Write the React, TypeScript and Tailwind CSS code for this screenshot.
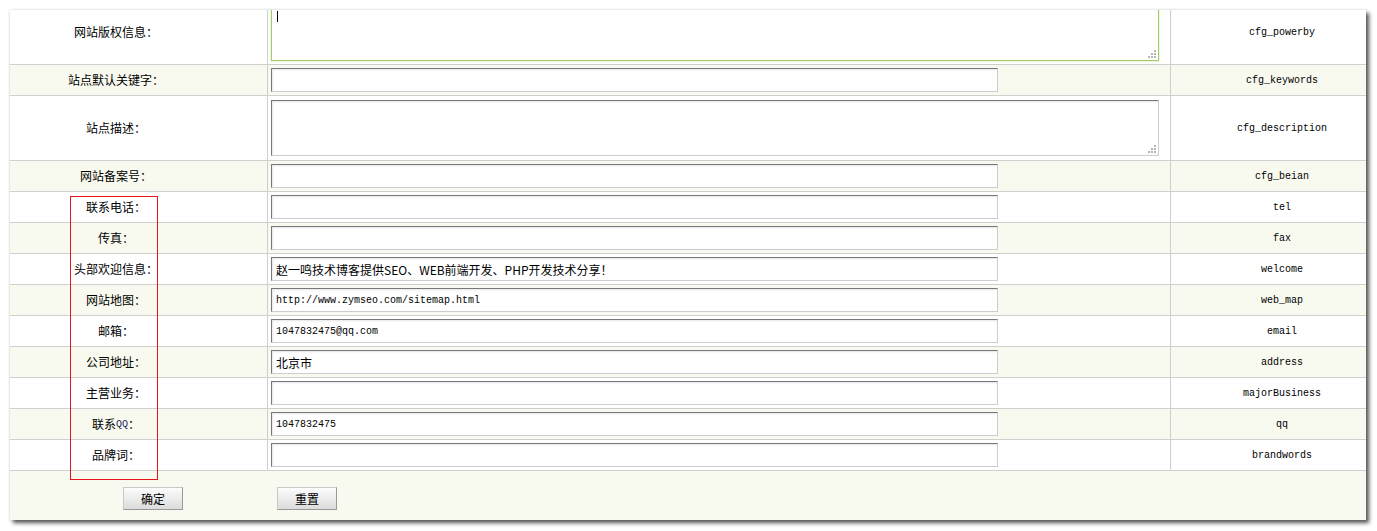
const cjk = '[font-family:"Noto_Sans_CJK_SC","Liberation_Sans",sans-serif]';
const mono = '[font-family:"Liberation_Mono","Noto_Sans_CJK_SC",monospace]';

type Row = {
  label: React.ReactNode;
  field: string;
  value?: string;
  valueMono?: boolean;
  kind?: 'input' | 'textarea' | 'focused';
};

const rows: Row[] = [
  { label: '网站版权信息：', field: 'cfg_powerby', kind: 'focused' },
  { label: '站点默认关键字：', field: 'cfg_keywords' },
  { label: '站点描述：', field: 'cfg_description', kind: 'textarea' },
  { label: '网站备案号：', field: 'cfg_beian' },
  { label: '联系电话：', field: 'tel' },
  { label: '传真：', field: 'fax' },
  { label: '头部欢迎信息：', field: 'welcome', value: '赵一鸣技术博客提供SEO、WEB前端开发、PHP开发技术分享！' },
  { label: '网站地图：', field: 'web_map', value: 'http://www.zymseo.com/sitemap.html', valueMono: true },
  { label: '邮箱：', field: 'email', value: '1047832475@qq.com', valueMono: true },
  { label: '公司地址：', field: 'address', value: '北京市' },
  { label: '主营业务：', field: 'majorBusiness' },
  {
    label: (
      <>
        联系<span className={`${mono} text-[10px] text-[#1a1a5a]`}>QQ</span>：
      </>
    ),
    field: 'qq',
    value: '1047832475',
    valueMono: true,
  },
  { label: '品牌词：', field: 'brandwords' },
];

const ResizeDots = () => (
  <svg className="absolute right-[2px] bottom-[2px]" width="9" height="9" viewBox="0 0 9 9">
    <rect x="6" y="0" width="2" height="2" fill="#b5b5b5" />
    <rect x="3" y="3" width="2" height="2" fill="#b5b5b5" />
    <rect x="6" y="3" width="2" height="2" fill="#b5b5b5" />
    <rect x="0" y="6" width="2" height="2" fill="#b5b5b5" />
    <rect x="3" y="6" width="2" height="2" fill="#b5b5b5" />
    <rect x="6" y="6" width="2" height="2" fill="#b5b5b5" />
  </svg>
);

const Field = ({ row }: { row: Row }) => {
  if (row.kind === 'focused') {
    return (
      <div className="relative w-[888px] h-[56px] shrink-0">
        <textarea
          defaultValue=""
          className="block w-full h-full resize-none border border-[#a3cb6a] bg-white outline-none shadow-[0_0_2px_#c9e3a3]"
        />
        <span className="absolute left-[6px] top-[6px] w-px h-[11px] bg-black" />
        <ResizeDots />
      </div>
    );
  }
  if (row.kind === 'textarea') {
    return (
      <div className="relative w-[888px] h-[56px] shrink-0">
        <textarea
          defaultValue=""
          className="block w-full h-full resize-none border border-t-[#787878] border-l-[#787878] border-b-[#cdcdcd] border-r-[#cdcdcd] bg-white outline-none shadow-[inset_1px_1px_2px_#e6e6e6]"
        />
        <ResizeDots />
      </div>
    );
  }
  return (
    <input
      type="text"
      readOnly
      defaultValue={row.value ?? ''}
      className={`block w-[727px] h-[24px] px-[4px] border border-t-[#787878] border-l-[#787878] border-b-[#cdcdcd] border-r-[#cdcdcd] bg-white outline-none shadow-[inset_1px_1px_2px_#e6e6e6] text-black ${
        row.valueMono ? `${mono} text-[10px]` : `${cjk} text-[12px]`
      }`}
    />
  );
};

const rowHeight = (i: number) => {
  if (i === 0) return 'h-[55px]';
  if (i === 2) return 'h-[65px]';
  return 'h-[31px]';
};

export default function App() {
  return (
    <div className="min-h-[531px] bg-white pt-[10px] pl-[10px]">
      <div className="relative w-[1356px] bg-white shadow-[3px_3px_4px_#555,0_0_3px_#ddd]">
        {rows.map((row, i) => (
          <div
            key={row.field}
            className={`flex ${rowHeight(i)} border-b border-[#cfcfcf] ${i % 2 === 1 ? 'bg-[#f9faef]' : 'bg-white'}`}
          >
            <div
              className={`w-[258px] shrink-0 border-r border-[#cfcfcf] flex items-center justify-center pr-[45px] ${
                i === 0 ? 'pb-[10px]' : ''
              } ${cjk} text-[12px] text-black`}
            >
              {row.label}
            </div>
            <div
              className={`w-[903px] shrink-0 border-r border-[#cfcfcf] flex pl-[3px] overflow-hidden ${
                i === 0 ? 'items-end pb-[3px]' : i === 2 ? 'items-start pt-[4px]' : 'items-center'
              }`}
            >
              <Field row={row} />
            </div>
            <div
              className={`flex-1 flex items-center justify-center pl-[27px] ${
                i === 0 ? 'pb-[10px]' : ''
              } ${mono} text-[10px] text-black`}
            >
              {row.field}
            </div>
          </div>
        ))}
        <div className="flex h-[49px] bg-[#f9faef] pt-[16px] pl-[113px]">
          <button
            type="button"
            className={`w-[60px] h-[23px] border border-[#c8c8c8] border-b-[#999] border-r-[#999] bg-gradient-to-b from-[#fcfcfc] to-[#dcdcdc] ${cjk} text-[12px] text-black`}
          >
            确定
          </button>
          <button
            type="button"
            className={`ml-[94px] w-[60px] h-[23px] border border-[#c8c8c8] border-b-[#999] border-r-[#999] bg-gradient-to-b from-[#fcfcfc] to-[#dcdcdc] ${cjk} text-[12px] text-black`}
          >
            重置
          </button>
        </div>
        <div className="absolute left-[60px] top-[186px] w-[88px] h-[284px] border border-[#e8141c] pointer-events-none" />
      </div>
    </div>
  );
}
